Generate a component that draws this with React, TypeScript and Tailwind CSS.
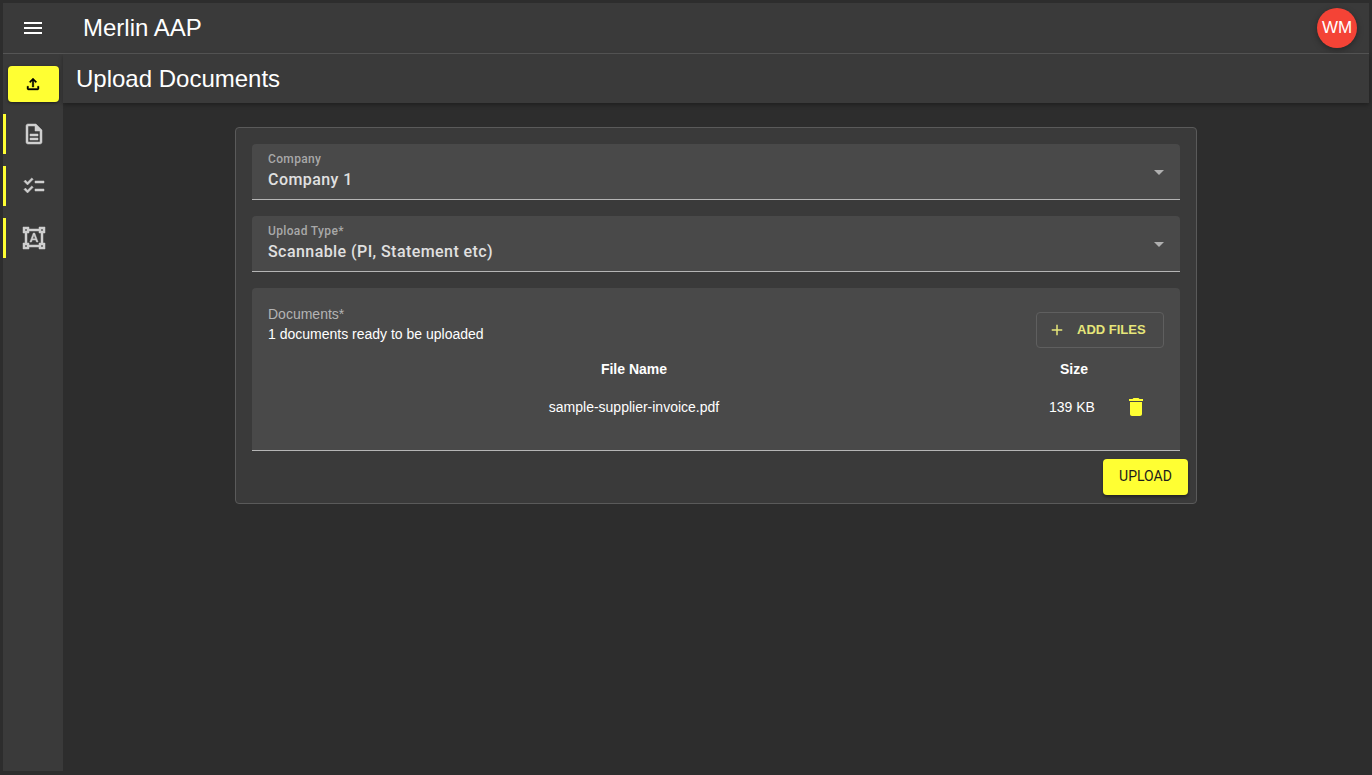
import { MdAdd, MdArrowDropDown, MdDelete, MdMenu } from 'react-icons/md';

// material paths, drawn by hand so they can take a stroke (icons in the picture are heavier than the stock ones)
const uploadPath = 'M18 15v3H6v-3H4v3c0 1.1.9 2 2 2h12c1.1 0 2-.9 2-2v-3h-2zM7 9l1.41 1.41L11 7.83V16h2V7.83l2.59 2.58L17 9l-5-5-5 5z';
const navItems = [
  'M8 16h8v2H8zm0-4h8v2H8zm6-10H6c-1.1 0-2 .9-2 2v16c0 1.1.89 2 1.99 2H18c1.1 0 2-.9 2-2V8l-6-6zm4 18H6V4h7v5h5v11z',
  'M22 7h-9v2h9V7zm0 8h-9v2h9v-2zM5.54 11 2 7.46l1.41-1.41 2.12 2.12 4.24-4.24 1.41 1.41L5.54 11zm0 8L2 15.46l1.41-1.41 2.12 2.12 4.24-4.24 1.41 1.41L5.54 19z',
  'M23 7V1h-6v2H7V1H1v6h2v10H1v6h6v-2h10v2h6v-6h-2V7h2zM3 3h2v2H3V3zm2 18H3v-2h2v2zm12-2H7v-2H5V7h2V5h10v2h2v10h-2v2zm4 2h-2v-2h2v2zM19 5V3h2v2h-2zm-5.27 9h-3.49l-.73 2H7.89l3.4-9h1.4l3.41 9h-1.63l-.74-2zm-3.04-1.26h2.61L12 8.91l-1.31 3.83z',
];

function HeavyIcon({ d, className }: { d: string; className: string }) {
  return (
    <svg viewBox="0 0 24 24" fill="currentColor" stroke="currentColor" strokeWidth="0.5" className={className}>
      <path d={d} />
    </svg>
  );
}

function SelectField({ label, value }: { label: string; value: string }) {
  return (
    <div className="flex h-14 items-center justify-between rounded-t border-b border-[#b5b5b5] bg-[#494949] pl-4 pr-[9px] font-['Roboto',sans-serif]">
      <div className="flex flex-col">
        <span className="text-[12px] font-medium leading-[14px] tracking-[0.35px] text-[#a8a8a8]">{label}</span>
        <span className="mt-[3px] text-[16px] font-medium leading-[22px] tracking-[0.43px] text-[#e0e0e0]">{value}</span>
      </div>
      <MdArrowDropDown className="h-6 w-6 text-[#b0b0b0]" />
    </div>
  );
}

export default function App() {
  return (
    <div className="flex h-[775px] w-[1372px] flex-col overflow-hidden bg-[#2d2d2d] pb-1 pl-[3px] pr-[3px] pt-[3px] font-['Liberation_Sans',sans-serif]">
      <header className="flex h-[51px] shrink-0 items-center justify-between border-b border-[#555555] bg-[#3a3a3a] pr-3">
        <div className="flex items-center">
          <div className="flex w-[60px] justify-center">
            <MdMenu className="h-6 w-6 text-white" />
          </div>
          <h1 className="ml-5 text-[24px] leading-8 text-white">Merlin AAP</h1>
        </div>
        <div className="flex h-10 w-10 items-center justify-center rounded-full bg-[#f44336] text-[17px] text-white shadow-[0_2px_6px_rgba(0,0,0,0.35)]">WM</div>
      </header>

      <div className="flex min-h-0 flex-1">
        <nav className="flex w-[60px] shrink-0 flex-col bg-[#3a3a3a] pt-3">
          <div className="ml-[5px] flex h-9 w-[51px] items-center justify-center rounded bg-[#ffff33] pr-[1px] shadow-[0_1px_3px_rgba(0,0,0,0.5)]">
            <HeavyIcon d={uploadPath} className="h-[18px] w-[18px] text-black" />
          </div>
          <div className="mt-3 flex flex-col gap-3">
            {navItems.map((d) => (
              <div key={d} className="flex h-10 items-center justify-center border-l-[3px] border-[#ffff33] pr-[1px]">
                <HeavyIcon d={d} className="h-6 w-6 text-[#cfcfcf]" />
              </div>
            ))}
          </div>
        </nav>

        <main className="min-w-0 flex-1">
          <div className="flex h-[49px] items-center bg-[#3a3a3a] pl-[13px] shadow-[0_2px_4px_rgba(0,0,0,0.3)]">
            <h2 className="text-[24px] leading-8 text-white">Upload Documents</h2>
          </div>

          <section className="ml-[172px] mt-6 flex h-[377px] w-[962px] flex-col gap-4 rounded border border-[#5a5a5a] bg-[#3a3a3a] px-4 pt-4">
            <SelectField label="Company" value="Company 1" />
            <SelectField label="Upload Type*" value="Scannable (PI, Statement etc)" />

            <div className="h-[163px] rounded-t border-b border-[#b5b5b5] bg-[#494949] px-4 pt-[17px]">
              <div className="flex items-start justify-between">
                <div>
                  <p className="text-[14px] leading-[18px] text-[#b4b4b4]">Documents*</p>
                  <p className="mt-[2px] text-[14px] leading-[18px] text-white">1 documents ready to be uploaded</p>
                </div>
                <button className="mt-[7px] flex h-9 w-[128px] items-center gap-[11px] rounded border border-[#5f5f5f] pl-[11px] text-[13px] font-bold text-[#e6e67a]">
                  <MdAdd className="h-[18px] w-[18px]" />
                  ADD FILES
                </button>
              </div>
              <div className="mt-3 grid grid-cols-[1fr_100px_60px] text-[14px] text-white">
                <div className="pr-1 text-center font-bold leading-[18px]">File Name</div>
                <div className="pl-10 text-center font-bold leading-[18px]">Size</div>
                <div />
                <div className="mt-[17px] pr-1 text-center leading-6">sample-supplier-invoice.pdf</div>
                <div className="mt-[17px] pl-9 text-center leading-6">139 KB</div>
                <div className="mt-[17px] flex justify-start pl-5">
                  <MdDelete className="h-6 w-6 text-[#ffff33]" />
                </div>
              </div>
            </div>

            <div className="-mr-2 -mt-[8px] flex justify-end">
              <button className="flex h-9 w-[85px] items-center justify-center rounded bg-[#ffff33] pb-[1px] font-['Roboto',sans-serif] text-[14px] text-[#1c1c1c] shadow-[0_2px_3px_rgba(0,0,0,0.4)]">
                UPLOAD
              </button>
            </div>
          </section>
        </main>
      </div>
    </div>
  );
}
